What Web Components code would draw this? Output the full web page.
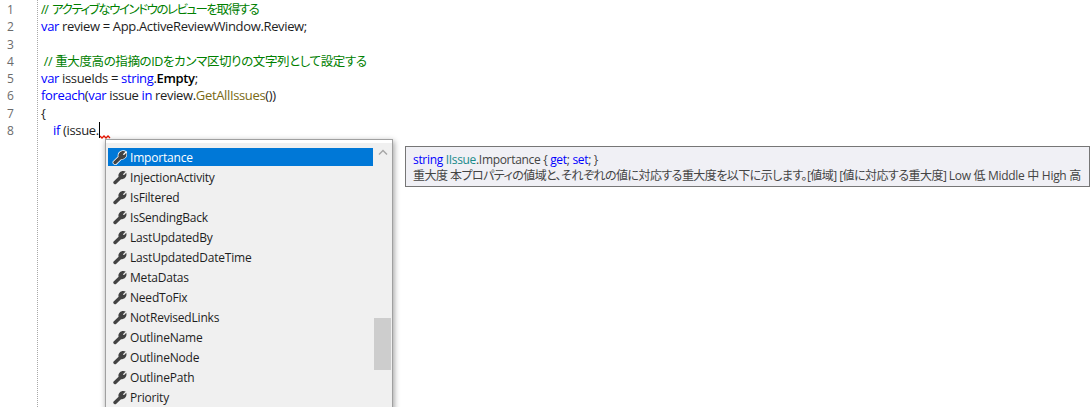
<!DOCTYPE html>
<html lang="ja">
<head>
<meta charset="utf-8">
<title>Editor</title>
<style>
html, body { margin: 0; height: 407px; overflow: hidden; background: #fff; }
body { font: 12px "Open Sans", "Noto Sans CJK JP", sans-serif; }
</style>
</head>
<body>
<template id="tpl-code-editor">
<style>
:host { display: block; position: relative; width: 1092px; height: 407px; overflow: hidden; background: #fff; color: #1e1e1e; }
.editor { display: flex; height: 100%; }
.gutter { width: 37px; flex: none; border-right: 1px dotted #a8a8a8; padding-top: 1px; color: #6b6b6b; font-size: 12px; }
.gutter div { height: 17.3px; line-height: 17.3px; padding-left: 7px; }
.code { display: flex; flex-direction: column; padding: 1px 0 0 3px; }
</style>
<div class="editor">
    <div class="gutter"><div>1</div><div>2</div><div>3</div><div>4</div><div>5</div><div>6</div><div>7</div><div>8</div></div>
    <div class="code"><slot></slot></div>
</div>
<slot name="overlay"></slot>
</template>

<template id="tpl-code-line">
<style>
:host { display: block; height: 17.3px; }
.line { line-height: 17.3px; white-space: pre; letter-spacing: -0.35px; font-size: 13px; font-feature-settings: "palt"; }
::slotted(.k) { color: #0000ff; }
::slotted(.c) { color: #008000; font-size: 12.5px; }
::slotted(.c1) { letter-spacing: -1.45px; word-spacing: 3px; }
::slotted(.c2) { letter-spacing: -0.38px; }
::slotted(.m) { color: #7a6a15; }
::slotted(.b) { font-weight: 600; color: #000; }
</style>
<div class="line"><slot></slot></div>
</template>

<template id="tpl-completion-list">
<style>
:host { display: block; position: absolute; left: 105px; top: 139px; width: 286px; height: 280px; border: 1px solid #a0a0a0; background: #f0f0f0; box-shadow: 1px 2px 6px rgba(0,0,0,.4); }
.top { height: 3px; background: #fff; }
.body { display: flex; height: 277px; background: #f0f0f0; }
.rows { width: 265px; margin-left: 2px; padding-top: 5px; flex: none; }
.bar { position: relative; flex: 1; }
.thumb { position: absolute; left: 1px; right: 1px; top: 175px; height: 52px; background: #cdcdcd; }
svg { position: absolute; left: 4px; top: 5px; width: 12px; height: 8px; }
</style>
<div class="top"></div>
<div class="body">
    <div class="rows"><slot></slot></div>
    <div class="bar">
        <svg viewBox="0 0 12 8"><path d="M2 6.5 L6 2.5 L10 6.5" fill="none" stroke="#a6a6a6" stroke-width="1.4"/></svg>
        <div class="thumb"></div>
    </div>
</div>
</template>

<template id="tpl-completion-item">
<style>
:host { display: flex; align-items: center; height: 18px; margin-bottom: 2px; font-size: 12px; letter-spacing: -0.2px; color: #1e1e1e; white-space: nowrap; }
:host([selected]) { background: #0078d7; color: #fff; }
svg { width: 15px; height: 15px; margin-left: 4px; margin-right: 3px; flex: none; color: #424242; }
.halo { display: none; }
:host([selected]) .halo { display: block; }
</style>
<svg viewBox="0 0 16 16">
    <path class="halo" d="M1.5 12.6 L7 7.2 C6.2 4.3 8.4 1 12 1 C13 1 13.8 1.2 14.6 1.7 L11.7 4.5 L12 5.1 L12.9 5.3 L15.2 2.8 C16.2 6.2 14 9.8 9.6 9.8 L4.3 15 C3.2 15.8 .7 14.1 1.5 12.6 Z" fill="none" stroke="#fff" stroke-width="1.6"/>
    <path fill="currentColor" d="M1.5 12.6 L7 7.2 C6.2 4.3 8.4 1 12 1 C13 1 13.8 1.2 14.6 1.7 L11.7 4.5 L12 5.1 L12.9 5.3 L15.2 2.8 C16.2 6.2 14 9.8 9.6 9.8 L4.3 15 C3.2 15.8 .7 14.1 1.5 12.6 Z"/>
</svg>
<span><slot></slot></span>
</template>

<template id="tpl-quick-info">
<style>
:host { display: block; position: absolute; left: 405px; top: 146px; width: 683px; height: 39px; border: 1px solid #767676; background: #f0f0f5; font-size: 12px; color: #444; }
.in { padding: 5px 0 0 7px; line-height: 15.5px; letter-spacing: -0.32px; white-space: pre; font-feature-settings: "palt"; }
::slotted(.k) { color: #0000ff; }
::slotted(.t) { color: #1a8a8a; }
::slotted(.jp) { letter-spacing: -0.54px; }
::slotted(.lat) { letter-spacing: -0.3px; }
</style>
<div class="in"><div><slot name="sig"></slot></div><div><slot name="doc"></slot></div></div>
</template>

<script>
class BaseElement extends HTMLElement {
    constructor() {
        super()
        const template = document.getElementById(`tpl-${this.constructor.tag}`)
        this.attachShadow({ mode: "open" }).appendChild(template.content.cloneNode(true))
    }
}
class CodeEditor extends BaseElement { static tag = "code-editor" }
class CodeLine extends BaseElement { static tag = "code-line" }
class CompletionList extends BaseElement { static tag = "completion-list" }
class CompletionItem extends BaseElement { static tag = "completion-item" }
class QuickInfo extends BaseElement { static tag = "quick-info" }
for (const element of [CodeEditor, CodeLine, CompletionList, CompletionItem, QuickInfo]) {
    customElements.define(element.tag, element)
}
</script>

<code-editor>
    <code-line><span class="c c1">// アクティブなウインドウのレビューを取得する</span></code-line>
    <code-line><span class="k">var</span> review = App.ActiveReviewWindow.Review;</code-line>
    <code-line> </code-line>
    <code-line><span class="c c2"> // 重大度高の指摘のIDをカンマ区切りの文字列として設定する</span></code-line>
    <code-line><span class="k">var</span> issueIds = <span class="k">string</span>.<span class="b">Empty</span>;</code-line>
    <code-line><span class="k">foreach</span>(<span class="k">var</span> issue <span class="k">in</span> review.<span class="m">GetAllIssues</span>())</code-line>
    <code-line>{</code-line>
    <code-line>    <span class="k">if</span> (issue.</code-line>
    <div slot="overlay" style="position:absolute;left:99px;top:122px;width:1px;height:16px;background:#000"></div>
    <svg slot="overlay" style="position:absolute;left:100px;top:135px" width="11" height="4" viewBox="0 0 11 4"><path d="M0 1 L2 3 L4 1 L6 3 L8 1 L10 3" fill="none" stroke="#e51400" stroke-width="1.3"/></svg>
    <completion-list slot="overlay">
        <completion-item selected>Importance</completion-item>
        <completion-item>InjectionActivity</completion-item>
        <completion-item>IsFiltered</completion-item>
        <completion-item>IsSendingBack</completion-item>
        <completion-item>LastUpdatedBy</completion-item>
        <completion-item>LastUpdatedDateTime</completion-item>
        <completion-item>MetaDatas</completion-item>
        <completion-item>NeedToFix</completion-item>
        <completion-item>NotRevisedLinks</completion-item>
        <completion-item>OutlineName</completion-item>
        <completion-item>OutlineNode</completion-item>
        <completion-item>OutlinePath</completion-item>
        <completion-item>Priority</completion-item>
    </completion-list>
    <quick-info slot="overlay"><span slot="sig" class="k">string</span><span slot="sig"> </span><span slot="sig" class="t">IIssue</span><span slot="sig">.Importance { </span><span slot="sig" class="k">get</span><span slot="sig">; </span><span slot="sig" class="k">set</span><span slot="sig">; }</span><span slot="doc" class="jp">重大度 本プロパティの値域と、それぞれの値に対応する重大度を以下に示します。[値域] [値に対応する重大度] </span><span slot="doc" class="lat">Low 低 Middle 中 High 高</span></quick-info>
</code-editor>
</body>
</html>
